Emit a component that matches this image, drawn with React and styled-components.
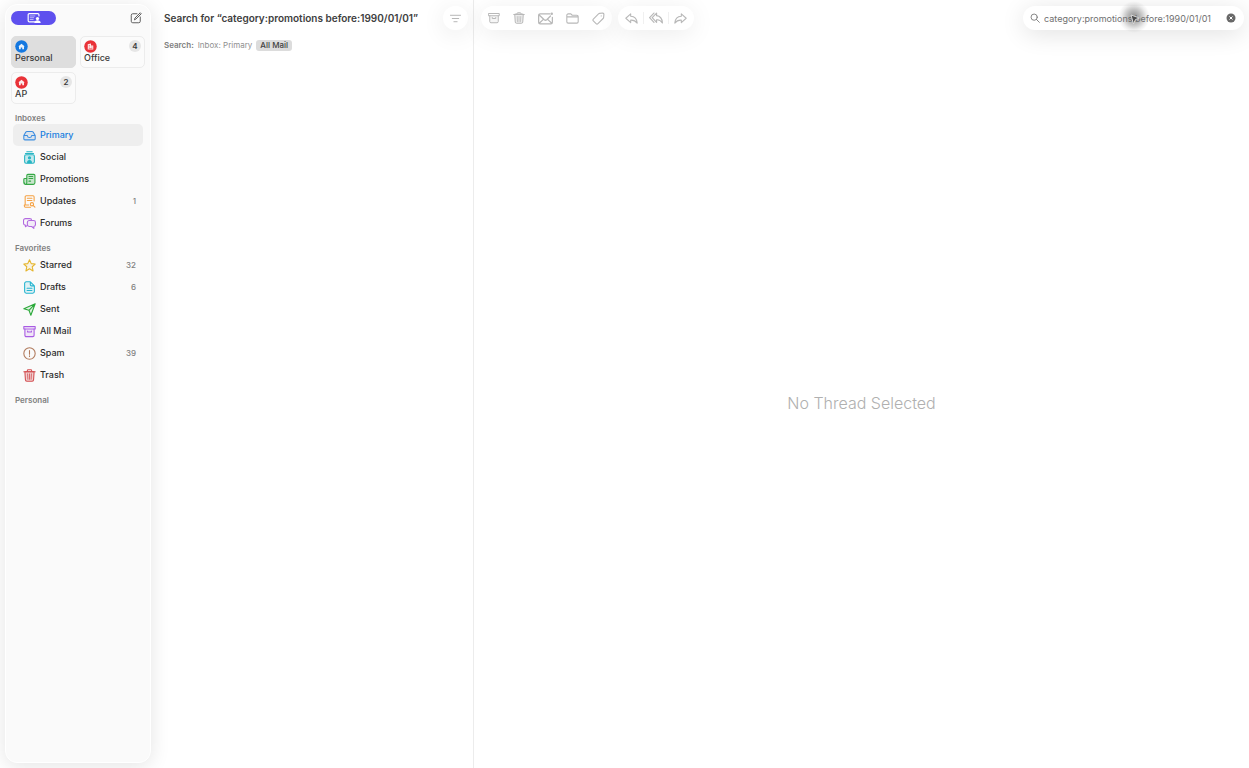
import { useState } from "react";
import styled, { createGlobalStyle } from "styled-components";

const GlobalStyle = createGlobalStyle`
  * {
    box-sizing: border-box;
  }
  body {
    margin: 0;
    background: #fff;
    color: #3a3a3a;
    font-family: Inter, "Liberation Sans", sans-serif;
    font-size: 9px;
    line-height: 12px;
  }
  button, input {
    margin: 0;
    padding: 0;
    border: none;
    background: none;
    color: inherit;
    font: inherit;
  }
  h1, h2, ul, p {
    margin: 0;
    padding: 0;
  }
`;

const StyledApp = styled.div`
  display: flex;
  min-height: 100vh;
  overflow: hidden;
`;

const StyledSidebar = styled.aside`
  flex: none;
  width: 146px;
  margin: 4px 0 5px 5px;
  padding: 6px 5px;
  border: 1px solid #fff;
  border-radius: 12px;
  background: #fafafa;
  box-shadow: 0 3px 20px rgba(0, 0, 0, 0.11);
  .top {
    display: flex;
    align-items: center;
    justify-content: space-between;
    height: 14px;
    padding-right: 3px;
  }
  nav {
    margin-top: 8px;
  }
`;

const StyledProfile = styled.button`
  display: flex;
  align-items: center;
  justify-content: center;
  width: 45px;
  height: 14px;
  border-radius: 7px;
  background: #5e50ee;
  color: #fff;
`;

const StyledIconButton = styled.button`
  display: flex;
  color: ${({ $color }) => $color || "#b8b8b8"};
`;

const StyledAccounts = styled.div`
  display: grid;
  grid-template-columns: 1fr 1fr;
  gap: 4px;
  margin-top: 11px;
`;

const StyledAccount = styled.button`
  display: flex;
  flex-direction: column;
  height: 32px;
  padding: 3px 3px 0;
  border: 1px solid ${({ $active }) => ($active ? "#dedede" : "#ececec")};
  border-radius: 5px;
  background: ${({ $active }) => ($active ? "#dedede" : "#fbfbfb")};
  font-weight: 500;
  text-align: left;
  .row {
    display: flex;
    align-items: center;
    justify-content: space-between;
    width: 100%;
    height: 12px;
  }
  .badge {
    min-width: 12px;
    height: 12px;
    border-radius: 6px;
    background: #e6e6e6;
    font-size: 8px;
    font-weight: 600;
    text-align: center;
  }
`;

const StyledSection = styled.section`
  margin-bottom: 8px;
  h2 {
    padding-left: 4px;
    color: #808080;
    font-size: 8px;
    font-weight: 600;
    line-height: 12px;
  }
  ul {
    display: flex;
    flex-direction: column;
    list-style: none;
    padding: 0 2px;
  }
`;

const StyledFolder = styled.button`
  display: flex;
  align-items: center;
  gap: 4px;
  width: 100%;
  height: 22px;
  padding: 0 7px 0 10px;
  border-radius: 5px;
  background: ${({ $active }) => ($active ? "#eeeeee" : "transparent")};
  color: ${({ $active }) => ($active ? "#1a7ee0" : "#2c2c2c")};
  font-weight: 500;
  text-align: left;
  svg {
    color: ${({ $color }) => $color};
  }
  .name {
    flex: 1;
  }
  .count {
    color: #808080;
    font-size: 8px;
  }
`;

const StyledList = styled.section`
  flex: none;
  width: 323px;
  padding: 6px 5px 0 13px;
  border-right: 1px solid #ececec;
  header {
    display: flex;
    align-items: center;
    justify-content: space-between;
    height: 24px;
  }
  h1 {
    color: #404040;
    font-size: 10px;
    font-weight: 600;
    line-height: 16px;
    white-space: nowrap;
  }
`;

const StyledFilter = styled.button`
  display: flex;
  align-items: center;
  justify-content: center;
  width: 25px;
  height: 24px;
  border-radius: 12px;
  background: #fff;
  color: #b0b0b0;
  box-shadow: 0 4px 24px rgba(0, 0, 0, 0.09);
`;

const StyledScopes = styled.div`
  display: flex;
  align-items: center;
  height: 12px;
  margin-top: 9px;
  color: #808080;
  font-size: 8px;
  .label {
    font-weight: 600;
  }
`;

const StyledScope = styled.button`
  height: 11px;
  padding: 0 4px;
  border-radius: 3px;
  background: ${({ $active }) => ($active ? "#dcdcdc" : "transparent")};
  color: ${({ $active }) => ($active ? "#404040" : "#909090")};
  font-weight: ${({ $active }) => ($active ? 500 : 400)};
  line-height: 11px;
`;

const StyledReader = styled.main`
  display: flex;
  flex: 1;
  flex-direction: column;
  min-width: 0;
  header {
    display: flex;
    gap: 6px;
    padding: 6px 5px 0 7px;
  }
  .empty {
    display: flex;
    flex: 1;
    align-items: center;
    justify-content: center;
    padding-top: 8px;
    color: #b0b0b0;
    font-size: 16px;
    font-weight: 300;
    line-height: 24px;
  }
`;

const StyledTools = styled.div`
  display: flex;
  align-items: center;
  gap: ${({ $gap }) => $gap}px;
  height: 24px;
  padding: 0 7px;
  border-radius: 12px;
  background: #fff;
  box-shadow: 0 4px 24px rgba(0, 0, 0, 0.08);
  .line {
    width: 1px;
    height: 12px;
    background: #f0f0f0;
  }
`;

const StyledSearch = styled.div`
  position: relative;
  display: flex;
  align-items: center;
  gap: 4px;
  width: 221px;
  height: 24px;
  margin-left: auto;
  padding: 0 8px 0 7px;
  border-radius: 12px;
  background: #fff;
  box-shadow: 0 4px 24px rgba(0, 0, 0, 0.12);
  color: #707070;
  input {
    flex: 1;
    min-width: 0;
    height: 14px;
    outline: none;
  }
  .pointer {
    position: absolute;
    top: -5px;
    left: 95px;
    width: 32px;
    height: 32px;
    background: radial-gradient(
      circle,
      rgba(80, 80, 80, 0.65) 0,
      rgba(110, 110, 110, 0.45) 30%,
      rgba(140, 140, 140, 0.15) 55%,
      transparent 70%
    );
    pointer-events: none;
  }
`;

const paths = {
  profile: (
    <>
      <path d="M13 18.500H4A2 2 0 0 1 2 16.500V6.500a2 2 0 0 1 2-2h14.500a2 2 0 0 1 2 2V8.500" />
      <path d="M5.500 8.500h8M5.500 11.500h6M5.500 14.500h5" strokeWidth="1" />
      <circle cx="18" cy="13" r="2.800" fill="currentColor" stroke="none" />
      <path d="M12.500 20.500c0-6 11-6 11 0z" fill="currentColor" stroke="none" />
    </>
  ),
  compose: (
    <path d="M14 3.500H5.500a3 3 0 0 0-3 3v12a3 3 0 0 0 3 3h12a3 3 0 0 0 3-3V10M9 15l1-3L20.500 1.500l2 2L12 14z" />
  ),
  primary: (
    <path
      d="M1.500 12 5 6a3 3 0 0 1 2.500-1.500h9A3 3 0 0 1 19 6l3.500 6v6a2 2 0 0 1-2 2h-17a2 2 0 0 1-2-2v-6H8c.5 5 7.500 5 8 0h6.500"
      fill="currentColor"
      fillOpacity="0.1"
    />
  ),
  social: (
    <>
      <rect x="3" y="7" width="18" height="15.500" rx="2.500" fill="currentColor" fillOpacity="0.25" />
      <path d="M4.500 4.500h15M7 1.500h10" />
      <circle cx="12" cy="12.500" r="2" fill="currentColor" />
      <path d="M8.500 21.500c0-5 7-5 7 0z" fill="currentColor" />
    </>
  ),
  promotions: (
    <>
      <path
        d="M7 18V4.500a2 2 0 0 1 2-2h11a2 2 0 0 1 2 2V18a3 3 0 0 1-3 3H4.500a3 3 0 0 1-3-3v-6a2 2 0 0 1 2-2H7v8c0 4-4.500 4-4.500 0"
        fill="currentColor"
        fillOpacity="0.25"
      />
      <path d="M11 6.500h7M11 10h7M11 15h3" />
    </>
  ),
  updates: (
    <>
      <path d="M20.500 11V3.500a2 2 0 0 0-2-2H6a2 2 0 0 0-2 2V18.500M14 22.500H4.500a2 2 0 0 1-2-2v-2h8M8 6h8.500M8 10h8.500" />
      <circle cx="16.500" cy="17" r="3" />
      <path d="m19 19.500 3 3" />
    </>
  ),
  forums: (
    <>
      <path d="M8 15.500 4.500 18v-3A3.500 3.500 0 0 1 1 11.500V6.500A3.500 3.500 0 0 1 4.500 3h8A3.500 3.500 0 0 1 16 6.500" />
      <path
        d="M11.500 6.500h8A3.500 3.500 0 0 1 23 10v4a3.500 3.500 0 0 1-3 3.500V21l-4-3.500h-4.500A3.500 3.500 0 0 1 8 14v-4a3.500 3.500 0 0 1 3.500-3.500z"
        fill="currentColor"
        fillOpacity="0.1"
      />
    </>
  ),
  starred: (
    <path
      d="m12 1.500 3.200 7 7.300.8-5.500 5 1.600 7.700-6.600-3.900L5.400 22 7 14.300l-5.500-5 7.300-.8z"
      fill="currentColor"
      fillOpacity="0.1"
    />
  ),
  drafts: (
    <>
      <path
        d="M13.500 1.500H6a3 3 0 0 0-3 3v15a3 3 0 0 0 3 3h12a3 3 0 0 0 3-3V9zv5.500A2 2 0 0 0 15.500 9H21"
        fill="currentColor"
        fillOpacity="0.12"
      />
      <path d="M7.500 13.500h9M7.500 17.500h9" />
    </>
  ),
  sent: (
    <path
      d="M22.500 1.500 1.500 10.500l9.500 3 3.500 9zM11 13.500l11.500-12"
      fill="currentColor"
      fillOpacity="0.12"
    />
  ),
  allmail: (
    <>
      <path d="M1.500 3h21v4.500h-21z" />
      <path
        d="M3.500 7.500V19a2.500 2.500 0 0 0 2.500 2.500h12a2.500 2.500 0 0 0 2.500-2.500V7.500"
        fill="currentColor"
        fillOpacity="0.12"
      />
      <path d="M8.500 11v2h7v-2" />
    </>
  ),
  spam: (
    <>
      <circle cx="12" cy="12" r="10.500" />
      <path d="M12 6.500v7M12 16v1.500" />
    </>
  ),
  trash: (
    <>
      <path
        d="M3.500 5l1 15a2.500 2.500 0 0 0 2.500 2.500h10a2.500 2.500 0 0 0 2.500-2.500l1-15z"
        fill="currentColor"
        fillOpacity="0.25"
      />
      <path d="M1.500 5h21M8 5V3a1.500 1.500 0 0 1 1.500-1.500h5A1.500 1.500 0 0 1 16 3v2" />
      <path d="M8.500 9l.5 10M12 9v10M15.500 9 15 19" strokeWidth="1.500" />
    </>
  ),
  filter: <path d="M1 5h22M5 12h14M8.500 19h7" />,
  mail: (
    <>
      <path d="M19 4.500H3.500a2.500 2.500 0 0 0-2.500 2.500v11a2.500 2.500 0 0 0 2.500 2.500h17A2.500 2.500 0 0 0 23 18V10M1.500 6l8.500 8c1.500 1.200 2.500 1.200 4 0l6-6M2 19.500l7-6.500M22 19.500 15 13" />
      <circle cx="22" cy="4.500" r="2" fill="currentColor" stroke="none" />
    </>
  ),
  folder: (
    <path d="M1.500 9h21M4 3.500h5l2.500 2.500H20a2.500 2.500 0 0 1 2.500 2.500V18a2.500 2.500 0 0 1-2.500 2.500H4A2.500 2.500 0 0 1 1.500 18V6A2.500 2.500 0 0 1 4 3.500z" />
  ),
  tag: (
    <>
      <path d="M14 2.500 20 2a2 2 0 0 1 2 2l-.5 6a3 3 0 0 1-1 2L11 21.500a2.500 2.500 0 0 1-3.500 0L2.500 16.500a2.500 2.500 0 0 1 0-3.500L12 3.500a3 3 0 0 1 2-1z" />
      <path d="M17 7v.2" />
    </>
  ),
  reply: (
    <path d="M10.500 3.500 1.500 11.500l9 8V15c6-.5 9 1.500 12 5.500C22 13 18 8.500 10.500 8z" />
  ),
  replyAll: (
    <path d="M13 3.500 5.500 11.500l7.500 8V15c5-.5 7.500 1.500 10 5.500C22.500 13 19 8.500 13 8zM8.500 3.500 1 11.500l7.500 8" />
  ),
  forward: (
    <path d="M13.500 3.500l9 8-9 8V15c-6-.5-9 1.500-12 5.500C2 13 6 8.500 13.500 8z" />
  ),
  search: (
    <>
      <circle cx="10" cy="10" r="7.500" />
      <path d="m15.500 15.500 7 7" />
    </>
  ),
};

function Icon({ name, size = 12, stroke = 2 }) {
  return (
    <svg
      width={size}
      height={size}
      viewBox="0 0 24 24"
      fill="none"
      stroke="currentColor"
      strokeWidth={stroke}
      strokeLinecap="round"
      strokeLinejoin="round"
      aria-hidden="true"
    >
      {paths[name]}
    </svg>
  );
}

function AccountIcon({ color, office }) {
  return (
    <svg width="13" height="13" viewBox="0 0 26 26" aria-hidden="true">
      <circle cx="13" cy="13" r="12.500" fill={color} />
      {office ? (
        <>
          <path d="M7.500 19V8.500L14 7v4h4.500v8z" fill="#fff" opacity="0.9" />
          <path d="M9.500 11H12M9.500 14H12M14.500 14H17M9.500 17H17" stroke={color} />
        </>
      ) : (
        <path d="m13 7.500 6 5-1 1v5h-3.500V15h-3v3.500H8v-5l-1-1z" fill="#fff" opacity="0.9" />
      )}
    </svg>
  );
}

const accounts = [
  { name: "Personal", color: "#1478e0" },
  { name: "Office", color: "#e93238", office: true, count: 4 },
  { name: "AP", color: "#e93238", count: 2 },
];

const sections = [
  {
    title: "Inboxes",
    folders: [
      { name: "Primary", icon: "primary", color: "#3b8de0" },
      { name: "Social", icon: "social", color: "#27b5c4" },
      { name: "Promotions", icon: "promotions", color: "#35a845" },
      { name: "Updates", icon: "updates", color: "#f5a142", count: 1 },
      { name: "Forums", icon: "forums", color: "#b36ae0" },
    ],
  },
  {
    title: "Favorites",
    folders: [
      { name: "Starred", icon: "starred", color: "#e5b52c", count: 32 },
      { name: "Drafts", icon: "drafts", color: "#27b5d0", count: 6 },
      { name: "Sent", icon: "sent", color: "#2ba93a" },
      { name: "All Mail", icon: "allmail", color: "#a95be3" },
      { name: "Spam", icon: "spam", color: "#b07a5c", count: 39 },
      { name: "Trash", icon: "trash", color: "#d34f52" },
    ],
  },
  { title: "Personal", folders: [] },
];

const actions = [
  { label: "Archive", icon: "allmail", size: 12 },
  { label: "Delete", icon: "trash", size: 12 },
  { label: "Mark unread", icon: "mail", size: 15 },
  { label: "Move", icon: "folder", size: 13 },
  { label: "Label", icon: "tag", size: 13 },
];

function Sidebar() {
  const [account, setAccount] = useState("Personal");
  const [folder, setFolder] = useState("Primary");
  return (
    <StyledSidebar>
      <div className="top">
        <StyledProfile aria-label="Profile">
          <Icon name="profile" size={14} />
        </StyledProfile>
        <StyledIconButton aria-label="Compose" $color="#606060">
          <Icon name="compose" />
        </StyledIconButton>
      </div>
      <StyledAccounts>
        {accounts.map(({ name, color, office, count }) => (
          <StyledAccount key={name} $active={name === account} onClick={() => setAccount(name)}>
            <span className="row">
              <AccountIcon color={color} office={office} />
              {count && <span className="badge">{count}</span>}
            </span>
            <span>{name}</span>
          </StyledAccount>
        ))}
      </StyledAccounts>
      <nav>
        {sections.map(({ title, folders }) => (
          <StyledSection key={title}>
            <h2>{title}</h2>
            <ul>
              {folders.map(({ name, icon, color, count }) => (
                <li key={name}>
                  <StyledFolder $active={name === folder} $color={color} onClick={() => setFolder(name)}>
                    <Icon name={icon} size={13} />
                    <span className="name">{name}</span>
                    {count && <span className="count">{count}</span>}
                  </StyledFolder>
                </li>
              ))}
            </ul>
          </StyledSection>
        ))}
      </nav>
    </StyledSidebar>
  );
}

export default function App() {
  const [query, setQuery] = useState("category:promotions before:1990/01/01");
  const [scope, setScope] = useState("All Mail");
  return (
    <StyledApp>
      <GlobalStyle />
      <Sidebar />
      <StyledList>
        <header>
          <h1>Search for “{query}”</h1>
          <StyledFilter aria-label="Filter">
            <Icon name="filter" size={11} />
          </StyledFilter>
        </header>
        <StyledScopes>
          <span className="label">Search:</span>
          {["Inbox: Primary", "All Mail"].map((s) => (
            <StyledScope key={s} $active={s === scope} onClick={() => setScope(s)}>
              {s}
            </StyledScope>
          ))}
        </StyledScopes>
      </StyledList>
      <StyledReader>
        <header>
          <StyledTools $gap={13}>
            {actions.map(({ label, icon, size }) => (
              <StyledIconButton key={label} aria-label={label}>
                <Icon name={icon} size={size} />
              </StyledIconButton>
            ))}
          </StyledTools>
          <StyledTools $gap={5}>
            <StyledIconButton aria-label="Reply">
              <Icon name="reply" size={13} />
            </StyledIconButton>
            <span className="line" />
            <StyledIconButton aria-label="Reply all">
              <Icon name="replyAll" size={14} />
            </StyledIconButton>
            <span className="line" />
            <StyledIconButton aria-label="Forward">
              <Icon name="forward" size={13} />
            </StyledIconButton>
          </StyledTools>
          <StyledSearch>
            <Icon name="search" size={10} />
            <input aria-label="Search mail" value={query} onChange={(e) => setQuery(e.target.value)} />
            <StyledIconButton aria-label="Clear" $color="#686868" onClick={() => setQuery("")}>
              <svg width="10" height="10" viewBox="0 0 20 20" aria-hidden="true">
                <circle cx="10" cy="10" r="9" fill="currentColor" />
                <path d="m7 7 6 6M13 7l-6 6" stroke="#fff" strokeWidth="2" />
              </svg>
            </StyledIconButton>
            <span className="pointer">
              <svg width="32" height="32" viewBox="0 0 32 32" aria-hidden="true">
                <path d="m13 14 8.500 3-4 1.500L15.500 23z" fill="#4a4a4a" stroke="#d8d8d8" />
              </svg>
            </span>
          </StyledSearch>
        </header>
        <p className="empty">No Thread Selected</p>
      </StyledReader>
    </StyledApp>
  );
}
